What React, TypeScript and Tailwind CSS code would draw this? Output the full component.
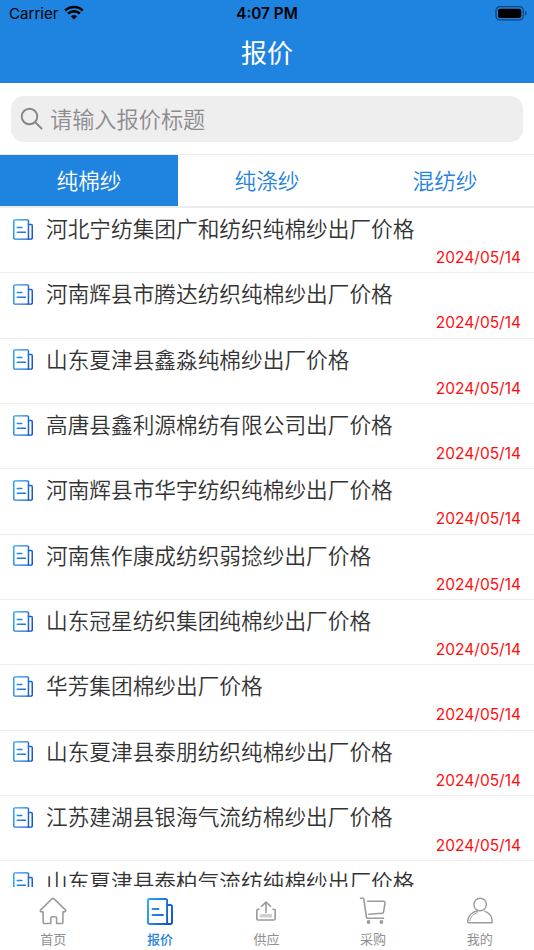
import React from 'react';

const tabs = ['纯棉纱', '纯涤纱', '混纺纱'];

const quotes = [
  { title: '河北宁纺集团广和纺织纯棉纱出厂价格', date: '2024/05/14' },
  { title: '河南辉县市腾达纺织纯棉纱出厂价格', date: '2024/05/14' },
  { title: '山东夏津县鑫淼纯棉纱出厂价格', date: '2024/05/14' },
  { title: '高唐县鑫利源棉纺有限公司出厂价格', date: '2024/05/14' },
  { title: '河南辉县市华宇纺织纯棉纱出厂价格', date: '2024/05/14' },
  { title: '河南焦作康成纺织弱捻纱出厂价格', date: '2024/05/14' },
  { title: '山东冠星纺织集团纯棉纱出厂价格', date: '2024/05/14' },
  { title: '华芳集团棉纱出厂价格', date: '2024/05/14' },
  { title: '山东夏津县泰朋纺织纯棉纱出厂价格', date: '2024/05/14' },
  { title: '江苏建湖县银海气流纺棉纱出厂价格', date: '2024/05/14' },
  { title: '山东夏津县泰柏气流纺纯棉纱出厂价格', date: '2024/05/14' },
];

function NewsIcon({ className }: { className: string }) {
  const id = React.useId();
  return (
    <svg viewBox="0 0 26 27" fill="none" className={className}>
      <defs>
        <linearGradient id={id} gradientUnits="userSpaceOnUse" x1="0" y1="8" x2="26" y2="18">
          <stop offset="0" stopColor="#2ba0fb" />
          <stop offset="1" stopColor="#1150c4" />
        </linearGradient>
      </defs>
      <g stroke={`url(#${id})`} strokeWidth="1.9" strokeLinecap="round" strokeLinejoin="round">
        <path d="M2.500 1h16.400a1.200 1.200 0 0 1 1.200 1.200V26H2.500A1.500 1.500 0 0 1 1 24.500v-22A1.500 1.500 0 0 1 2.500 1Z" />
        <path d="M20.100 7h3.400A1.500 1.500 0 0 1 25 8.500v16a1.500 1.500 0 0 1-1.500 1.500h-3.400" />
        <path d="M5.500 11h6M5.500 17.010l10.500-.02" />
      </g>
    </svg>
  );
}

function HomeIcon() {
  return (
    <svg viewBox="0 0 28 28" fill="none" stroke="#9b9b9b" strokeWidth="1.600" strokeLinecap="round" strokeLinejoin="round" className="h-7 w-7">
      <path d="M12.900 1.900a1.600 1.600 0 0 1 2.200 0l11.200 11c.9.900.2 2-.9 2h-1.500V25a1.500 1.500 0 0 1-1.500 1.500h-4.800V21a1.300 1.300 0 0 0-1.300-1.300h-3.200a1.300 1.300 0 0 0-1.300 1.300v5.500H5.600A1.500 1.500 0 0 1 4.100 25V14.900H2.600c-1.100 0-1.800-1.100-.9-2Z" />
    </svg>
  );
}

function SupplyIcon() {
  return (
    <svg viewBox="0 0 28 28" fill="none" stroke="#9b9b9b" strokeWidth="1.600" strokeLinecap="round" strokeLinejoin="round" className="h-7 w-7">
      <path d="M7 12.300H6a1.200 1.200 0 0 0-1.200 1.200v8.200A1.300 1.300 0 0 0 6.100 23h15.800a1.300 1.300 0 0 0 1.300-1.300v-8.200a1.200 1.200 0 0 0-1.200-1.200h-1" />
      <path d="M14 15.500V5M9.500 9.300 14 5l4.500 4.300" />
      <path d="M8.500 17.500h11v2.600h-11Z" fill="#cfcfcf" stroke="#c4c4c4" strokeWidth=".6" />
    </svg>
  );
}

function CartIcon() {
  return (
    <svg viewBox="0 0 28 28" fill="none" stroke="#9b9b9b" strokeWidth="1.600" strokeLinecap="round" strokeLinejoin="round" className="h-7 w-7">
      <path d="M1.500 1.200h2.300a1 1 0 0 1 1 .8L7.500 20.300a1 1 0 0 0 1 .9h16" />
      <path d="M8.500 4.200h16a1.500 1.500 0 0 1 1.500 1.700L24.600 15a1.500 1.500 0 0 1-1.400 1.300L9.800 17.200" />
      <g fill="#9b9b9b" stroke="none">
        <circle cx="9.500" cy="25" r="1.900" />
        <circle cx="22.400" cy="25" r="1.900" />
      </g>
    </svg>
  );
}

function UserIcon() {
  return (
    <svg viewBox="0 0 28 28" fill="none" stroke="#9b9b9b" strokeWidth="1.400" strokeLinecap="round" strokeLinejoin="round" className="h-7 w-7">
      <circle cx="14.100" cy="7.500" r="6.200" />
      <path d="M12 13.700C6.300 14.500 1.700 19 1.700 24.900a.8.800 0 0 0 .8.800h23a.8.800 0 0 0 .8-.8c0-4.900-3.200-9-7.500-10.700" />
      <path d="M11.500 15.700C7.300 16.800 4.300 20 3.900 23.800" strokeWidth=".9" />
    </svg>
  );
}

const navItems = [
  { label: '首页', icon: <HomeIcon /> },
  { label: '报价', icon: <NewsIcon className="h-[27px] w-[26px]" />, active: true },
  { label: '供应', icon: <SupplyIcon /> },
  { label: '采购', icon: <CartIcon /> },
  { label: '我的', icon: <UserIcon /> },
];

export default function QuotePage() {
  return (
    <div className="flex h-[950px] w-[534px] flex-col overflow-hidden bg-white font-['Inter','Noto_Sans_CJK_SC',sans-serif] text-[#333]">
      <header className="h-[83px] shrink-0 bg-[#1f83e0]">
        <div className="grid h-[27px] grid-cols-3 items-start text-black">
          <div className="flex items-start gap-[6px] pl-[9px]">
            <span className="text-[15.100px] leading-[28px]">Carrier</span>
            <svg viewBox="0 0 20 15" className="mt-[5px] h-[15px] w-5">
              <path d="M10 14.500 6.900 11.300a4.600 4.600 0 0 1 6.200 0Z" />
              <g fill="none" stroke="#000" strokeWidth="2.500">
                <path d="M4.100 8.700a8.500 8.500 0 0 1 11.800 0" />
                <path d="M1.200 5.500a12.600 12.600 0 0 1 17.600 0" />
              </g>
            </svg>
          </div>
          <span className="text-center text-[15.300px] leading-[28px] font-semibold">4:07 PM</span>
          <svg viewBox="0 0 32 15" className="mt-[6px] mr-[7px] h-[15px] w-8 justify-self-end">
            <rect x="1" y=".6" width="27.300" height="13.300" rx="3.800" fill="none" stroke="#104272" strokeWidth="1.200" />
            <rect x="3" y="2.700" width="23.300" height="9.200" rx="2" />
            <path d="M30 4.900c2 .5 2 4.200 0 4.700Z" fill="#104272" />
          </svg>
        </div>
        <h1 className="text-center text-[26px] leading-[54px] font-normal text-white">报价</h1>
      </header>

      <div className="h-[71px] shrink-0 px-[11px] pt-[13px]">
        <div className="flex h-[46px] items-center rounded-[13px] bg-[#eee] pl-[9px]">
          <svg viewBox="0 0 24 24" fill="none" stroke="#858585" strokeWidth="1.900" strokeLinecap="round" className="h-6 w-6">
            <circle cx="9.500" cy="9.500" r="7.800" />
            <path d="m15.200 15.200 6.300 6.300" />
          </svg>
          <span className="ml-[6px] pt-[2px] text-[22.200px] font-[350] text-[#8b8b8f]">请输入报价标题</span>
        </div>
      </div>

      <div className="grid h-[54px] shrink-0 grid-cols-3 border-t border-b-2 border-[#ececec]">
        {tabs.map((tab, i) => (
          <div
            key={tab}
            className={
              i === 0
                ? 'h-[51px] bg-[#1f83e0] text-center text-[21.700px] leading-[53px] font-[350] text-white'
                : 'h-[51px] text-center text-[21.700px] leading-[53px] font-[350] text-[#1f83e0]'
            }
          >
            {tab}
          </div>
        ))}
      </div>

      <ul className="min-h-0 flex-1 overflow-hidden">
        {quotes.map((quote) => (
          <li key={quote.title} className="h-[65.350px] border-b border-[#ececec] pr-[13px] pl-[13px]">
            <div className="flex h-[42px] items-center">
              <NewsIcon className="h-[21px] w-5" />
              <span className="ml-[13px] text-[21.680px] leading-[42px] font-[350] whitespace-nowrap">{quote.title}</span>
            </div>
            <div className="text-right text-[15.500px] leading-[15px] text-[#ff0d0d]">{quote.date}</div>
          </li>
        ))}
      </ul>

      <nav className="grid h-[63px] shrink-0 grid-cols-5 bg-white pr-px">
        {navItems.map((item) => (
          <div key={item.label} className="flex flex-col items-center pt-[10px]">
            <div className="flex h-7 items-center">{item.icon}</div>
            <span className={item.active ? 'mt-[5px] text-[13px] leading-[19px] font-medium text-[#1f83e0]' : 'mt-[5px] text-[13px] leading-[19px] text-[#8f8f8f]'}>
              {item.label}
            </span>
          </div>
        ))}
      </nav>
    </div>
  );
}
